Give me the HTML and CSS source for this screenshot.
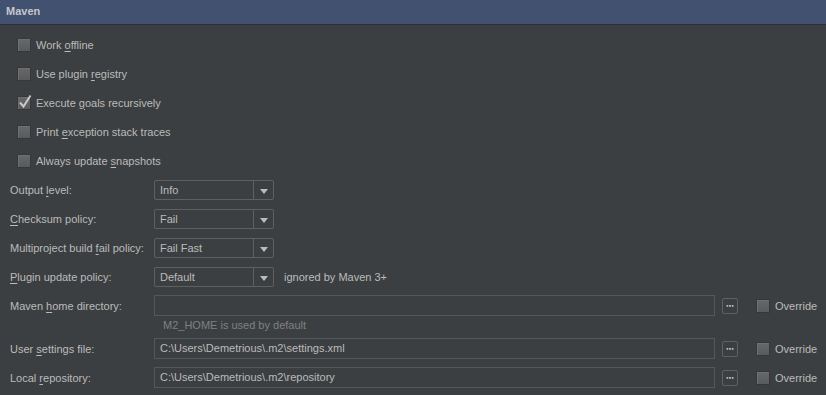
FILE: index.html
```html
<!DOCTYPE html>
<html lang="en">
<head>
  <meta charset="UTF-8">
  <title>Maven</title>
  <link rel="stylesheet" href="styles.css">
</head>
<body>

  <!-- Header -->
  <header class="title-bar">Maven</header>

  <main class="panel">
    <!-- Checkbox options -->
    <div class="check-list">
      <label class="check-row"><span class="box"></span><span>Work <u>o</u>ffline</span></label>
      <label class="check-row"><span class="box"></span><span>Use plugin <u>r</u>egistry</span></label>
      <label class="check-row">
        <span class="box checked">
          <svg viewBox="0 0 16 16" width="16" height="16"><path d="M3 8.5 L6.5 12.5 L13.5 1.5" fill="none" stroke="#c9c9c9" stroke-width="2"/></svg>
        </span><span>Execute <u>g</u>oals recursively</span>
      </label>
      <label class="check-row"><span class="box"></span><span>Print <u>e</u>xception stack traces</span></label>
      <label class="check-row"><span class="box"></span><span>Always update <u>s</u>napshots</span></label>
    </div>

    <!-- Combo options -->
    <div class="form-row">
      <span class="label">Output <u>l</u>evel:</span>
      <div class="combo"><span class="combo-text">Info</span><span class="combo-arrow"></span></div>
    </div>
    <div class="form-row">
      <span class="label"><u>C</u>hecksum policy:</span>
      <div class="combo"><span class="combo-text">Fail</span><span class="combo-arrow"></span></div>
    </div>
    <div class="form-row">
      <span class="label">Multiproject build <u>f</u>ail policy:</span>
      <div class="combo"><span class="combo-text">Fail Fast</span><span class="combo-arrow"></span></div>
    </div>
    <div class="form-row">
      <span class="label"><u>P</u>lugin update policy:</span>
      <div class="combo"><span class="combo-text">Default</span><span class="combo-arrow"></span></div>
      <span class="note">ignored by Maven 3+</span>
    </div>

    <!-- Path options -->
    <div class="form-row">
      <span class="label">Maven <u>h</u>ome directory:</span>
      <div class="field"></div>
      <span class="browse"><svg viewBox="0 0 16 16" width="16" height="16"><rect x="4" y="8" width="2" height="2" fill="#bbb"/><rect x="7" y="8" width="2" height="2" fill="#bbb"/><rect x="10" y="8" width="2" height="2" fill="#bbb"/></svg></span>
      <label class="override"><span class="box"></span><span>Override</span></label>
    </div>
    <div class="hint">M2_HOME is used by default</div>
    <div class="form-row">
      <span class="label">User <u>s</u>ettings file:</span>
      <div class="field">C:\Users\Demetrious\.m2\settings.xml</div>
      <span class="browse"><svg viewBox="0 0 16 16" width="16" height="16"><rect x="4" y="8" width="2" height="2" fill="#bbb"/><rect x="7" y="8" width="2" height="2" fill="#bbb"/><rect x="10" y="8" width="2" height="2" fill="#bbb"/></svg></span>
      <label class="override"><span class="box"></span><span>Override</span></label>
    </div>
    <div class="form-row">
      <span class="label">Local <u>r</u>epository:</span>
      <div class="field">C:\Users\Demetrious\.m2\repository</div>
      <span class="browse"><svg viewBox="0 0 16 16" width="16" height="16"><rect x="4" y="8" width="2" height="2" fill="#bbb"/><rect x="7" y="8" width="2" height="2" fill="#bbb"/><rect x="10" y="8" width="2" height="2" fill="#bbb"/></svg></span>
      <label class="override"><span class="box"></span><span>Override</span></label>
    </div>
  </main>

</body>
</html>
```

FILE: styles.css
```css
/* Global Styles */
body {
  margin: 0;
  background: #3c3f41;
  color: #bbbbbb;
  font-family: "Liberation Sans", Arial, sans-serif;
  font-size: 11px;
  overflow: hidden;
}

u {
  text-decoration-thickness: 1px;
  text-underline-offset: 2px;
}

/* Header */
.title-bar {
  height: 24px;
  line-height: 23px;
  padding-left: 6px;
  background: #42516f;
  border-bottom: 1px solid #2b2e3b;
  color: #c4c7cc;
  font-weight: bold;
}

.panel {
  padding: 5px 0 0 10px;
}

/* Checkboxes */
.check-list {
  display: flex;
  flex-direction: column;
  padding-left: 7px;
}

.check-row {
  height: 29px;
  display: flex;
  align-items: center;
}

.box {
  position: relative;
  width: 12px;
  height: 12px;
  margin-right: 5px;
  border: 1px solid #353738;
  border-radius: 1px;
  background: linear-gradient(#666869, #585a5c);
  box-shadow: inset 1px 1px 0 #6e7071;
  flex: none;
}

.box svg {
  position: absolute;
  left: -1px;
  top: -3px;
}

/* Form rows */
.form-row {
  height: 29px;
  display: flex;
  align-items: center;
}

.label {
  width: 144px;
  flex: none;
}

.combo {
  width: 118px;
  height: 18px;
  display: flex;
  border: 1px solid #5e6061;
  border-radius: 2px;
}

.combo-text {
  flex: 1;
  line-height: 18px;
  padding-left: 5px;
}

.combo-arrow {
  width: 19px;
  border-left: 1px solid #5e6061;
  position: relative;
}

.combo-arrow::after {
  content: "";
  position: absolute;
  left: 6px;
  top: 8px;
  border-left: 4px solid transparent;
  border-right: 4px solid transparent;
  border-top: 5px solid #bbbbbb;
}

.note {
  margin-left: 10px;
}

.field {
  flex: 1;
  min-width: 0;
  height: 19px;
  line-height: 19px;
  padding-left: 5px;
  border: 1px solid #555758;
}

.browse {
  width: 14px;
  height: 14px;
  margin-left: 7px;
  border: 1px solid #5e6061;
  border-radius: 2px;
  display: flex;
  align-items: center;
  justify-content: center;
  overflow: hidden;
  flex: none;
}

.browse svg {
  margin-top: -1px;
}

.override {
  width: 70px;
  margin-left: 18px;
  display: flex;
  align-items: center;
  flex: none;
}

.hint {
  height: 14px;
  line-height: 11px;
  padding-left: 153px;
  color: #808080;
}
```
